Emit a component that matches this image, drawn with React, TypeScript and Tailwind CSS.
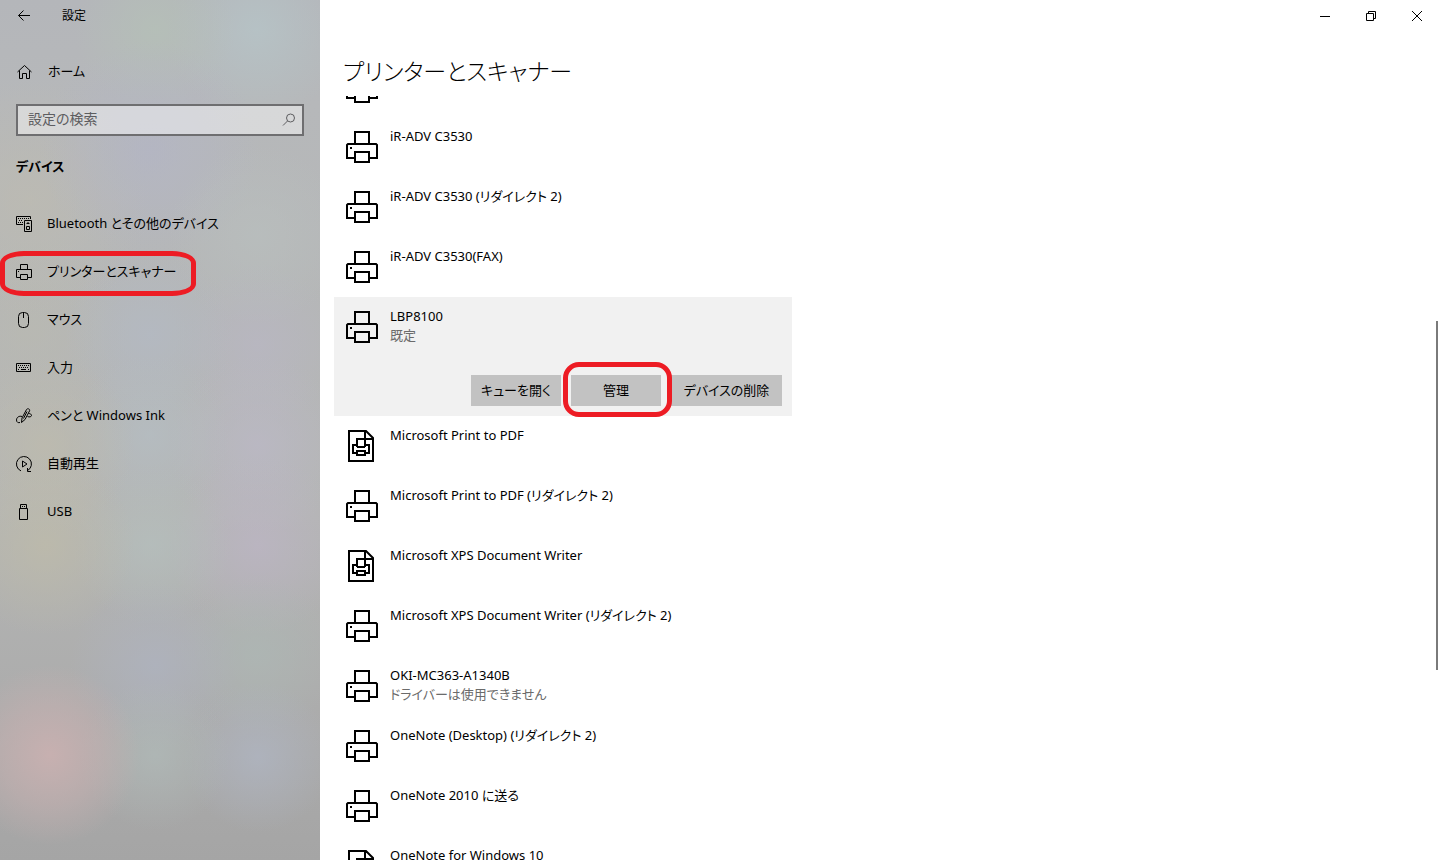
import type { ReactNode } from "react"

type IconProps = { className?: string }

function BackIcon() {
  return (
    <svg width="12" height="12" viewBox="0 0 12 12" fill="none" stroke="currentColor">
      <path d="M0.5 5.5H12M5.5 0.5L0.5 5.5L5.5 10.5" />
    </svg>
  )
}

function HomeIcon() {
  return (
    <svg width="16" height="16" viewBox="0 0 16 16" fill="none" stroke="currentColor">
      <path d="M1.5 8L8.5 1.5L15.5 8M3.5 6.5V14.5H6.5V9.5H10.5V14.5H13.5V6.5" />
    </svg>
  )
}

function SearchIcon() {
  return (
    <svg width="14" height="14" viewBox="0 0 14 14" fill="none" stroke="currentColor">
      <circle cx="8.5" cy="5" r="4" />
      <path d="M5.5 8L1 12.5" />
    </svg>
  )
}

function BluetoothDevicesIcon() {
  return (
    <svg width="16" height="16" viewBox="0 0 16 16" fill="none" stroke="currentColor">
      <path d="M7 8.5H0.5V0.5H14.5V3M8.5 4.5H15.5V15.5H8.5Z" />
      <path d="M2 2.5H13M3 4.5H7M2 6.5H7" strokeDasharray="1 1" />
      <path d="M10.5 7.5H13.5M12 6V8M10.5 10.5H13.5V13.5H10.5Z" />
    </svg>
  )
}

function SmallPrinterIcon() {
  return (
    <svg width="16" height="16" viewBox="0 0 16 16" fill="none" stroke="currentColor">
      <path d="M4.5 6V0.5H11.5V6" />
      <path d="M4.5 13.5H0.5V5.5H15.5V13.5H11.5M4.5 10.5H11.5V15.5H4.5Z" />
      <path d="M2 7.5H3" />
    </svg>
  )
}

function MouseIcon() {
  return (
    <svg width="16" height="16" viewBox="0 0 16 16" fill="none" stroke="currentColor">
      <rect x="2.5" y="0.5" width="10" height="15" rx="4" />
      <path d="M7.5 0.5V6" />
    </svg>
  )
}

function KeyboardIcon() {
  return (
    <svg width="16" height="16" viewBox="0 0 16 16" fill="none" stroke="currentColor">
      <path d="M0.5 3.5H14.5V11.5H0.5Z" />
      <path d="M2 5.5H13M3 7.5H13" strokeDasharray="1 1" />
      <path d="M2 9.5H3M5 9.5H10M12 9.5H13" />
    </svg>
  )
}

function PenIcon() {
  return (
    <svg width="16" height="16" viewBox="0 0 16 16" fill="none" stroke="currentColor">
      <path d="M5.5 14.5L6 10L10.5 1.5C11.5 0 14.5 1 13.5 3L9 11.5ZM11 3.5L7.5 10.5" />
      <path d="M6 8.5C3 7.5 0.5 9.5 0.5 12C0.5 14.5 2.5 15 4 14.5M12.5 5.5C14.5 5.5 15.5 6.5 15.5 7.5C15.5 8.5 13.5 9.5 11.5 8.5" />
    </svg>
  )
}

function AutoPlayIcon() {
  return (
    <svg width="16" height="16" viewBox="0 0 16 16" fill="none" stroke="currentColor">
      <path d="M5 14.9A7.5 7.5 0 1 1 11.5 14.6" />
      <path d="M11.5 12V15.5H15M6.5 5V11L11 8Z" />
    </svg>
  )
}

function UsbIcon() {
  return (
    <svg width="16" height="16" viewBox="0 0 16 16" fill="none" stroke="currentColor">
      <path d="M4.5 4V0.5H10.5V4M3.5 4.5H11.5V15.5H3.5Z" />
      <path d="M6 2.5H7M8 2.5H9" />
    </svg>
  )
}

function PrinterIcon({ className = "" }: IconProps) {
  return (
    <svg className={`shrink-0 ${className}`} width="32" height="32" viewBox="0 0 32 32" fill="none" stroke="black" strokeWidth="2">
      <path d="M9 13V1H23V13" />
      <path d="M9 27H1V14L2 13H30L31 14V27H23M9 21H23V31H9Z" />
      <path d="M4 17H6" />
    </svg>
  )
}

function DocumentPrinterIcon({ className = "" }: IconProps) {
  return (
    <svg className={`shrink-0 ${className}`} width="32" height="32" viewBox="0 0 32 32" fill="none" stroke="black" strokeWidth="2">
      <path d="M3 1H20L27 8V31H3ZM19 1V9H27" />
      <path d="M11 17V9H19V17M10 23H7V15H11M19 15H23V23H20M11 17H19M11 21H19V25H11Z" />
    </svg>
  )
}

const navItems: { label: string; icon: ReactNode; current?: boolean }[] = [
  { label: "Bluetooth とその他のデバイス", icon: <BluetoothDevicesIcon /> },
  { label: "プリンターとスキャナー", icon: <SmallPrinterIcon />, current: true },
  { label: "マウス", icon: <MouseIcon /> },
  { label: "入力", icon: <KeyboardIcon /> },
  { label: "ペンと Windows Ink", icon: <PenIcon /> },
  { label: "自動再生", icon: <AutoPlayIcon /> },
  { label: "USB", icon: <UsbIcon /> },
]

type Device = { name: string; status?: string; kind?: "document"; selected?: boolean }

const devices: Device[] = [
  { name: "iR-ADV C3530" },
  { name: "iR-ADV C3530 (リダイレクト 2)" },
  { name: "iR-ADV C3530(FAX)" },
  { name: "LBP8100", status: "既定", selected: true },
  { name: "Microsoft Print to PDF", kind: "document" },
  { name: "Microsoft Print to PDF (リダイレクト 2)" },
  { name: "Microsoft XPS Document Writer", kind: "document" },
  { name: "Microsoft XPS Document Writer (リダイレクト 2)" },
  { name: "OKI-MC363-A1340B", status: "ドライバーは使用できません" },
  { name: "OneNote (Desktop) (リダイレクト 2)" },
  { name: "OneNote 2010 に送る" },
  { name: "OneNote for Windows 10", kind: "document" },
]

function Sidebar() {
  return (
    <aside className="w-80 shrink-0 bg-[radial-gradient(circle_at_50px_755px,#c7b0b0,#c7b0b080_50px,transparent_90px),radial-gradient(circle_at_155px_755px,#b0bbb9b0,transparent_75px),radial-gradient(circle_at_258px_757px,#afb5c2c0,transparent_75px),radial-gradient(circle_at_155px_665px,#aeb3c0c0,transparent_85px),radial-gradient(circle_at_257px_655px,#adb8b5b0,transparent_80px),radial-gradient(circle_at_45px_545px,#bebba9c0,transparent_90px),radial-gradient(circle_at_152px_545px,#b5c0beb0,transparent_80px),radial-gradient(circle_at_258px_545px,#bdb5c6b0,transparent_90px),radial-gradient(circle_at_45px_445px,#bfbcacb0,transparent_90px),radial-gradient(circle_at_150px_435px,#b5bec4b0,transparent_80px),radial-gradient(circle_at_258px_445px,#bcb9c8b0,transparent_90px),radial-gradient(circle_at_150px_335px,#b3bac5b0,transparent_85px),radial-gradient(circle_at_258px_345px,#b9b7c4b0,transparent_80px),radial-gradient(circle_at_258px_235px,#b9bfbeb0,transparent_90px),radial-gradient(circle_at_150px_150px,#b3b5c6b0,transparent_110px),radial-gradient(circle_at_30px_200px,#bdbbb1c0,transparent_120px),radial-gradient(circle_at_30px_330px,#b9b9b1c0,transparent_100px),radial-gradient(circle_at_155px_30px,#b5c1b7c0,transparent_80px),radial-gradient(circle_at_257px_30px,#b6c5c8c0,transparent_90px),linear-gradient(#b4b6ba,#b6b8ba_12%,#b4b5b4_60%,#ababab_85%,#a5a5a5)]">
      <div className="flex h-8 items-center text-xs">
        <button type="button" aria-label="戻る" className="flex h-8 w-12 items-center justify-center">
          <BackIcon />
        </button>
        <span className="ml-3.5">設定</span>
      </div>

      <a href="#home" className="mt-4 flex h-12 items-center gap-4 px-4 text-[13px]">
        <HomeIcon />
        ホーム
      </a>

      <div className="mx-4 mt-2 flex h-8 items-center border-2 border-[#6e6e70] bg-white/45 pr-1.5 text-[#5d5d60]">
        <input
          type="text"
          aria-label="設定の検索"
          placeholder="設定の検索"
          className="min-w-0 flex-1 bg-transparent pb-0.5 pl-2.5 text-sm outline-none placeholder:text-[#5d5d60]"
        />
        <SearchIcon />
      </div>

      <h2 className="mt-5 px-4 text-[13px] leading-5 font-bold">デバイス</h2>

      <nav className="mt-6">
        <ul>
          {navItems.map((item) => (
            <li key={item.label} className="relative">
              <a
                href="#"
                aria-current={item.current ? "page" : undefined}
                className="flex h-12 items-center gap-[15px] px-4 text-[13px]"
              >
                {item.icon}
                {item.label}
              </a>
              {item.current && (
                <span className="pointer-events-none absolute top-[3px] left-0 h-[45px] w-49 rounded-[24px/12px] border-5 border-[#ed1c24]" />
              )}
            </li>
          ))}
        </ul>
      </nav>
    </aside>
  )
}

function WindowControls() {
  return (
    <div className="flex h-8 justify-end">
      <button type="button" aria-label="最小化" className="flex w-[46px] items-center justify-center">
        <svg width="10" height="10" viewBox="0 0 10 10" stroke="black">
          <path d="M0 5.5H10" />
        </svg>
      </button>
      <button type="button" aria-label="元に戻す" className="flex w-[46px] items-center justify-center">
        <svg width="10" height="10" viewBox="0 0 10 10" fill="none" stroke="black">
          <path d="M0.5 2.5H7.5V9.5H0.5ZM2.5 2.5V0.5H9.5V7.5H7.5" />
        </svg>
      </button>
      <button type="button" aria-label="閉じる" className="flex w-[46px] items-center justify-center">
        <svg width="10" height="10" viewBox="0 0 10 10" stroke="black">
          <path d="M0 0L10 10M10 0L0 10" />
        </svg>
      </button>
    </div>
  )
}

function DeviceActions() {
  return (
    <div className="flex justify-end gap-2.5 pr-2.5 pb-2.5 text-[13px]">
      <button type="button" className="h-[31px] w-[90px] bg-[#c2c2c2]">
        キューを開く
      </button>
      <div className="relative">
        <button type="button" className="h-[31px] w-[90px] bg-[#c2c2c2]">
          管理
        </button>
        <span className="pointer-events-none absolute -top-[13px] -right-[11px] -bottom-[11px] -left-2 z-10 rounded-2xl border-5 border-[#ed1c24]" />
      </div>
      <button type="button" className="h-[31px] w-[111px] bg-[#c2c2c2]">
        デバイスの削除
      </button>
    </div>
  )
}

function DeviceRow({ device }: { device: Device }) {
  return (
    <li className={device.selected ? "flex h-[119px] flex-col justify-between bg-[#f1f1f1]" : "h-15"}>
      <div className="flex gap-3 pl-3">
        {device.kind === "document" ? <DocumentPrinterIcon className="mt-3.5" /> : <PrinterIcon className="mt-3.5" />}
        <div className="pt-2.5 text-[13px] leading-[19px] whitespace-nowrap">
          <p>{device.name}</p>
          {device.status && <p className="text-[#6b6b6b]">{device.status}</p>}
        </div>
      </div>
      {device.selected && <DeviceActions />}
    </li>
  )
}

export default function App() {
  return (
    <div className="flex h-screen overflow-hidden bg-white font-['Noto_Sans','Noto_Sans_CJK_JP',sans-serif] text-black [font-feature-settings:'palt']">
      <Sidebar />

      <main className="flex min-w-0 flex-1 flex-col">
        <WindowControls />
        <h1 className="flex h-16 shrink-0 items-center pt-3.5 pl-[23px] text-[23px] font-light">プリンターとスキャナー</h1>

        <div className="flex min-h-0 flex-1 justify-between overflow-hidden pr-0.5">
          <ul className="ml-3.5 w-[458px]">
            {/* scrolled part way under the heading */}
            <li className="flex h-[21px] items-end overflow-hidden pb-3.5 pl-3">
              <PrinterIcon />
            </li>
            {devices.map((device) => (
              <DeviceRow key={device.name} device={device} />
            ))}
          </ul>
          <div className="mt-[225px] h-[349px] w-0.5 bg-[#7a7a7a]" />
        </div>
      </main>
    </div>
  )
}
